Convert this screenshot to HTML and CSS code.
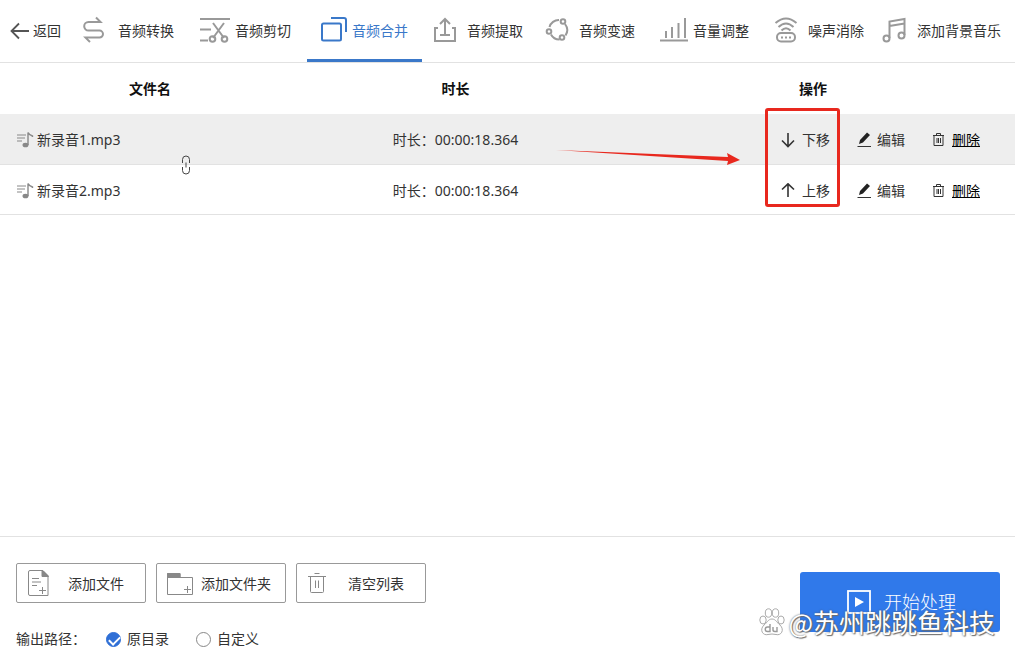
FILE: index.html
```html
<!DOCTYPE html>
<html lang="zh-CN">
<head>
  <meta charset="UTF-8" />
  <meta name="viewport" content="width=device-width, initial-scale=1.0">
  <title>音频合并</title>
  <link rel="stylesheet" href="styles.css">
</head>
<body>
  <nav class="toolbar">
    <button type="button" class="back">
      <svg width="20" height="20" viewBox="0 0 20 20"><path d="M19 10H2M9 2.5L1.5 10L9 17.5" stroke="#555" stroke-width="1.8"/></svg>
      返回
    </button>
    <a href="#" class="tab">
      <svg class="tab-icon" viewBox="0 0 32 32"><path d="M14 2.500L18.500 7H6.500a4.300 4.300 0 0 0 0 8.600H17.500a3.500 3.500 0 0 1 0 7H3.500L8 27"/></svg>
      音频转换
    </a>
    <a href="#" class="tab">
      <svg class="tab-icon" viewBox="0 0 32 32"><path d="M1 4H31M1 14.500H12M1 25.500H9M14 8L25 23M25 8L14 23"/><circle cx="13.500" cy="24" r="2.800"/><circle cx="25.500" cy="24" r="2.800"/></svg>
      音频剪切
    </a>
    <a href="#" class="tab active">
      <svg class="tab-icon" viewBox="0 0 32 32"><rect x="6" y="8.500" width="19" height="17" rx="1.500"/><path d="M15 3H28q2 0 2 2V17"/></svg>
      音频合并
    </a>
    <a href="#" class="tab">
      <svg class="tab-icon" viewBox="0 0 32 32"><path d="M7 13H4V26H24V13H21M14 21V4M9 9L14 4L19 9M9 20H19"/></svg>
      音频提取
    </a>
    <a href="#" class="tab">
      <svg class="tab-icon" viewBox="0 0 32 32"><path d="M6.500 12A9.500 9.500 0 0 1 16 5M22 9A10 10 0 0 1 22.500 20.500M16.500 24.500A9.500 9.500 0 0 1 8 19.500"/><circle cx="20" cy="6.500" r="2.300"/><circle cx="6" cy="16.500" r="2.300"/><circle cx="19" cy="22.500" r="2.300"/></svg>
      音频变速
    </a>
    <a href="#" class="tab">
      <svg class="tab-icon" viewBox="0 0 32 32"><path d="M3 25.500H31M9 23V16M15 23V12M21.500 23V8M28 23V3"/></svg>
      音量调整
    </a>
    <a href="#" class="tab">
      <svg class="tab-icon" viewBox="0 0 32 32"><path d="M3.500 8Q14 -1 24.500 8M6.500 12Q14 5 21.500 12M9.500 15.500Q14 11 18.500 15.500"/><rect x="5" y="18" width="18" height="8.500" rx="4"/><path d="M9 22.500h2M13 22.500h2M17 22.500h2"/></svg>
      噪声消除
    </a>
    <a href="#" class="tab">
      <svg class="tab-icon" viewBox="0 0 32 32"><path d="M8.500 23V6.500L23.500 4V20M8.500 11L23.500 8.500"/><circle cx="5.500" cy="23.500" r="3"/><circle cx="20.500" cy="20.500" r="3"/></svg>
      添加背景音乐
    </a>
  </nav>

  <main class="list">
    <table>
      <thead>
        <tr>
          <th class="col-name">文件名</th>
          <th class="col-time">时长</th>
          <th>操作</th>
        </tr>
      </thead>
      <tbody>
        <tr class="selected">
          <td>
            <div class="file">
              <svg width="18" height="18" viewBox="0 0 18 18"><path d="M1 4H10M1 7H9M1 10H6" stroke="#888" fill="none"/><path d="M12 14V1.500Q13 4 16.500 5V6" stroke="#888" stroke-width="1.400" fill="none"/><ellipse cx="9.500" cy="14" rx="3" ry="2.300" fill="#888"/></svg>
              新录音1.mp3
            </div>
          </td>
          <td class="time">时长：00:00:18.364</td>
          <td>
            <div class="actions">
              <button type="button"><svg class="icon" viewBox="0 0 16 16"><path d="M8 1V14M2 8.500L8 14.500L14 8.500"/></svg>下移</button>
              <button type="button"><svg class="icon" viewBox="0 0 16 16"><path d="M2.500 14.500H16" stroke-width="1"/><path d="M4 12L5 8L12 0.500L15 3L8 10.500Z" fill="#222" stroke="none"/></svg>编辑</button>
              <a href="#"><svg class="icon" viewBox="0 0 16 16"><path d="M3 3.500H14M6.500 3V1.500H10.500V3M4 3.500V13.500H13V3.500M7 6V11M8.500 6V11M10.500 6V11" stroke-width="1"/></svg><span>删除</span></a>
            </div>
          </td>
        </tr>
        <tr>
          <td>
            <div class="file">
              <svg width="18" height="18" viewBox="0 0 18 18"><path d="M1 4H10M1 7H9M1 10H6" stroke="#888" fill="none"/><path d="M12 14V1.500Q13 4 16.500 5V6" stroke="#888" stroke-width="1.400" fill="none"/><ellipse cx="9.500" cy="14" rx="3" ry="2.300" fill="#888"/></svg>
              新录音2.mp3
            </div>
          </td>
          <td class="time">时长：00:00:18.364</td>
          <td>
            <div class="actions">
              <button type="button"><svg class="icon" viewBox="0 0 16 16"><path d="M8 14V1M2 6.500L8 0.800L14 6.500"/></svg>上移</button>
              <button type="button"><svg class="icon" viewBox="0 0 16 16"><path d="M2.500 14.500H16" stroke-width="1"/><path d="M4 12L5 8L12 0.500L15 3L8 10.500Z" fill="#222" stroke="none"/></svg>编辑</button>
              <a href="#"><svg class="icon" viewBox="0 0 16 16"><path d="M3 3.500H14M6.500 3V1.500H10.500V3M4 3.500V13.500H13V3.500M7 6V11M8.500 6V11M10.500 6V11" stroke-width="1"/></svg><span>删除</span></a>
            </div>
          </td>
        </tr>
      </tbody>
    </table>
    <svg class="chain" width="10" height="20" viewBox="0 0 10 20"><path d="M1.500 8V4.500a3.500 3.500 0 0 1 7 0V8M1.500 12V15.500a3.500 3.500 0 0 0 7 0V12M5 7.500V12.500"/></svg>
    <svg class="pointer" width="184" height="16" viewBox="0 0 184 16"><path d="M0 1L172 8L171 4L184 11L171 16L172 12Z" fill="#e8281e"/></svg>
    <div class="highlight"></div>
  </main>

  <footer>
    <div>
      <div class="file-buttons">
        <button type="button">
          <svg width="28" height="28" viewBox="0 0 28 28"><path d="M5 1.500H18L23 6.500V26.500H5Q3.500 26.500 3.500 25V3Q3.500 1.500 5 1.500Z"/><path d="M17 1L23.500 7.500H17Z" fill="#888"/><path d="M7 9.500H14M7 13H16M7 16.500H12M17.500 18V25M14 21.500H21"/></svg>
          <span>添加文件</span>
        </button>
        <button type="button">
          <svg width="28" height="28" viewBox="0 0 28 28"><path d="M2.500 25.500V4.500H15V8.500H27.500V25.500Z"/><path d="M2.500 4.500H15V8.500H2.500Z" fill="#888"/><path d="M22.500 17V24M19 20.500H26"/></svg>
          <span>添加文件夹</span>
        </button>
        <button type="button">
          <svg width="28" height="28" viewBox="0 0 28 28"><path d="M3 7.500H21M9.500 4.500H14.500M5.500 7.500V22.500Q5.500 23.500 6.500 23.500H17.500Q18.500 23.500 18.500 22.500V7.500M10.500 11.500V19M13.500 11.500V19"/></svg>
          <span>清空列表</span>
        </button>
      </div>
      <div class="output">
        <span class="output-label">输出路径：</span>
        <input type="radio" name="output" id="origin" checked>
        <label for="origin">原目录</label>
        <input type="radio" name="output" id="custom">
        <label for="custom">自定义</label>
      </div>
    </div>
    <button type="button" class="start">
      <svg width="24" height="24" viewBox="0 0 24 24"><rect x="1" y="1" width="22" height="22" fill="none" stroke="#fff" stroke-width="1.800"/><path d="M8 7L17 12L8 17Z" fill="#fff"/></svg>
      开始处理
    </button>
    <div class="watermark">
      <svg width="26" height="28" viewBox="0 0 26 28"><g fill="#fff" stroke="#aaa"><ellipse cx="4" cy="12" rx="3.200" ry="4"/><ellipse cx="9.500" cy="5" rx="3.200" ry="4.200"/><ellipse cx="16.500" cy="5" rx="3.200" ry="4.200"/><ellipse cx="22" cy="12" rx="3.200" ry="4"/><path d="M13 11C17 11 18 15 21 17C26 22 22 28 17 26.500Q13 25.500 9 26.500C4 28 0 22 5 17C8 15 9 11 13 11Z"/></g><path d="M11 16V23.500H8.500a2 2 0 0 1 0-4.500H11M14 19V22Q14 23.500 16 23.500H18V19" fill="none" stroke="#999" stroke-width="1.400"/></svg>
      <span>@苏州跳跳鱼科技</span>
    </div>
  </footer>
</body>
</html>
```
FILE: styles.css
```css
* {
  box-sizing: border-box;
}
body {
  margin: 0;
  min-height: 100vh;
  display: flex;
  flex-direction: column;
  background: #fff;
  color: #333;
  font-family: "Noto Sans", "Noto Sans CJK SC", sans-serif;
  font-size: 14px;
  line-height: 20px;
}
button {
  padding: 0;
  border: none;
  background: none;
  color: inherit;
  font: inherit;
  cursor: pointer;
}
a {
  color: inherit;
  text-decoration: none;
}
svg {
  flex-shrink: 0;
  fill: none;
}

/* top tabs */
.toolbar {
  display: grid;
  grid-template-columns: 71fr 117fr 117fr 117fr 115fr 112fr 114fr 115fr 137fr;
  height: 63px;
  border-bottom: 1px solid #e2e2e2;
}
.back {
  display: flex;
  align-items: center;
  justify-content: flex-end;
  gap: 3px;
  padding-right: 10px;
  white-space: nowrap;
}
.tab {
  display: flex;
  align-items: center;
  justify-content: flex-end;
  gap: 4px;
  padding-right: 14px;
  padding-top: 3px;
  border-bottom: 3px solid transparent;
  white-space: nowrap;
}
.tab-icon {
  width: 32px;
  height: 32px;
  stroke: #999;
  stroke-width: 2;
}
.tab.active {
  margin-left: 2px;
  color: #3a78c9;
  border-color: #3a78c9;
}
.tab.active .tab-icon {
  stroke: #3a78c9;
}

/* file list */
.list {
  position: relative;
  flex: 1;
}
table {
  width: 100%;
  border-collapse: collapse;
  table-layout: fixed;
}
.col-name {
  width: 300px;
}
.col-time {
  width: 311px;
}
th {
  height: 51px;
  padding: 0;
  color: #111;
}
td {
  height: 50px;
  padding: 3px 0 0;
  border-bottom: 1px solid #e2e2e2;
}
.selected {
  background: #eee;
}
.file {
  display: flex;
  align-items: center;
  gap: 3px;
  padding-left: 16px;
}
.time {
  text-align: center;
}
.actions {
  display: flex;
  justify-content: flex-end;
  gap: 25px;
  padding-right: 35px;
}
.actions button,
.actions a {
  display: flex;
  align-items: center;
  gap: 6px;
}
.actions a {
  color: #000;
}
.actions a span {
  text-decoration: underline;
}
.icon {
  width: 16px;
  height: 16px;
  stroke: #333;
  stroke-width: 1.6;
}
.chain {
  position: absolute;
  left: 181px;
  top: 92px;
  stroke: #444;
}
.pointer {
  position: absolute;
  right: 275px;
  top: 86px;
}
.highlight {
  position: absolute;
  right: 175px;
  top: 45px;
  width: 75px;
  height: 99px;
  border: 3px solid #e8281e;
  border-radius: 3px;
  pointer-events: none;
}

/* bottom bar */
footer {
  position: relative;
  display: flex;
  justify-content: space-between;
  align-items: flex-start;
  padding: 26px 15px 9px 16px;
  border-top: 1px solid #e2e2e2;
}
.file-buttons {
  display: flex;
  gap: 10px;
}
.file-buttons button {
  display: flex;
  align-items: center;
  width: 130px;
  height: 40px;
  padding: 0 8px;
  border: 1px solid #999;
  border-radius: 2px;
}
.file-buttons svg {
  stroke: #888;
}
.file-buttons span {
  flex: 1;
  padding-left: 2px;
  padding-top: 2px;
  text-align: center;
  white-space: nowrap;
}
.output {
  display: flex;
  align-items: center;
  margin-top: 26px;
}
.output-label {
  width: 90px;
}
.output input {
  appearance: none;
  width: 15px;
  height: 15px;
  margin: 0 6px 0 0;
  border: 1px solid #888;
  border-radius: 50%;
}
.output input:checked {
  border-color: #2f6fd6;
  background: #2f6fd6;
}
.output input:checked::before {
  content: "";
  display: block;
  width: 9px;
  height: 5px;
  margin: 3px 2px;
  border-left: 2px solid #fff;
  border-bottom: 2px solid #fff;
  transform: rotate(-45deg);
}
.output label {
  margin-right: 27px;
}
.start {
  display: flex;
  align-items: center;
  justify-content: center;
  gap: 13px;
  width: 200px;
  height: 60px;
  margin-top: 9px;
  padding-left: 3px;
  border-radius: 3px;
  background: #3079ea;
  color: #fff;
  font-size: 18px;
  font-weight: 300;
}
.watermark {
  position: absolute;
  right: 20px;
  bottom: 18px;
  display: flex;
  align-items: center;
  gap: 3px;
  color: #fff;
  font-family: "Noto Sans CJK SC", sans-serif;
  font-size: 26px;
  line-height: 36px;
  text-shadow: 0 0 2px #555, 1px 1px 1px #777;
  pointer-events: none;
}
```
